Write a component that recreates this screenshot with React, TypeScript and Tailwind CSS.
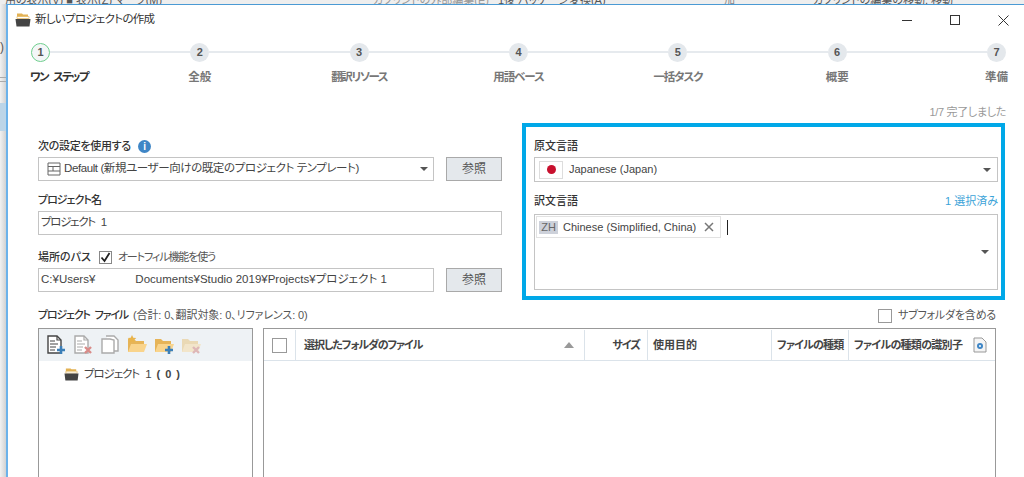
const jp = "font-['Liberation_Sans','Noto_Sans_CJK_JP',sans-serif] [font-feature-settings:'palt']";

const steps = [
  { label: "ワン ステップ", track: "tracking-[-1.8px] [word-spacing:4px]" },
  { label: "全般", track: "" },
  { label: "翻訳リソース", track: "tracking-[-1.5px]" },
  { label: "用語ベース", track: "tracking-[-1px]" },
  { label: "一括タスク", track: "tracking-[-1.2px]" },
  { label: "概要", track: "" },
  { label: "準備", track: "" },
];

const Caret = () => <div className="h-0 w-0 border-x-[4px] border-t-[4px] border-x-transparent border-t-[#555]" />;

const FileIcon = ({ color, mark, copy }: { color: string; mark?: "plus" | "x"; copy?: boolean }) => (
  <svg width="20" height="20" viewBox="0 0 20 20" fill="none">
    {copy && <path d="M6 1h8l4 4v11h-4" fill="#fff" stroke={color} strokeWidth="1.4" />}
    <path d={copy ? "M2 4h8l4 1v13H2z" : "M2 1h9l4 4v13H2z"} fill="#fff" stroke={color} strokeWidth="1.4" />
    {!copy && <path d="M11 1v4h4" stroke={color} strokeWidth="1.2" />}
    {!copy && <path d="M4 6h5M4 9h8M4 12h6M4 15h5" stroke={color} strokeWidth="1.2" />}
    {mark === "plus" && <path d="M15 11v8M11 15h8" stroke="#3b7fb8" strokeWidth="2.6" />}
    {mark === "x" && <path d="M12 12l6 6M18 12l-6 6" stroke="#d98b88" strokeWidth="2.4" />}
  </svg>
);

const FolderIcon = ({ mark, star, faded }: { mark?: "plus" | "x"; star?: boolean; faded?: boolean }) => (
  <svg width="20" height="20" viewBox="0 0 20 20" fill="none" opacity={faded ? 0.4 : 1}>
    <path d="M1 4h6l2 2h8v11H1z" fill="#e6b458" />
    <path d="M4 9h16l-3 8H1z" fill="#f9d48c" />
    {star && <path d="M5 0l1.300 2.800 3 .3-2.200 2 .6 3L5 6.600 2.300 8.100l.6-3-2.200-2 3-.3z" fill="#e9b44c" />}
    {mark === "plus" && <path d="M15 11v8M11 15h8" stroke="#3b7fb8" strokeWidth="2.6" />}
    {mark === "x" && <path d="M12 12l6 6M18 12l-6 6" stroke="#c8605c" strokeWidth="2.4" />}
  </svg>
);

const ProjectIcon = ({ size }: { size: number }) => (
  <svg width={size} height={size} viewBox="0 0 16 16" fill="none">
    <path d="M2 1.500h5l1 1h5v4H2z" fill="#e3b254" />
    <path d="M2 4.500h12v2H2z" fill="#fff" stroke="#e3b254" strokeWidth="0.6" />
    <path d="M0.500 7h15l-1 7.500h-13z" fill="#444" />
  </svg>
);

const BrowseButton = () => (
  <button className="flex h-[24px] w-[56px] items-center justify-center border border-[#a9a9a9] bg-[#e4e8ec] text-[12px] text-[#555]">
    参照
  </button>
);

const Label = ({ children, className = "" }: { children: React.ReactNode; className?: string }) => (
  <div className={`flex h-[22px] items-center text-[11px] font-medium text-[#333] ${className}`}>{children}</div>
);

const inputBox = "flex h-[24px] items-center border border-[#c4c4c4] bg-white text-[11.5px] text-[#444]";

const HeaderCell = ({ className, children }: { className: string; children: React.ReactNode }) => (
  <div className={`flex h-full shrink-0 items-center whitespace-nowrap border-r border-[#dbe3ea] text-[11px] font-bold text-[#444] ${className}`}>
    {children}
  </div>
);

const App = () => {
  return (
    <div className={`flex h-[477px] w-[1024px] flex-col overflow-hidden bg-white ${jp}`}>
      <div className="flex h-[4px] shrink-0 overflow-hidden bg-[#eeeeee] text-[11px] leading-[12px] text-[#555]">
        <div className="mt-[-6px] flex whitespace-nowrap">
          <span className="ml-[5px] w-[280px]">用の表示(V) ■ 表示(Z) マーク(M)</span>
          <span className="ml-[88px] w-[125px] text-[#999]">カソリンドの外部編集(E)</span>
          <span className="w-[226px]">1後 バッケージ変換(A)</span>
          <span className="w-[89px] text-[#888]">加</span>
          <span>カソリンドの編集の移動, 移動</span>
        </div>
      </div>
      <div className="flex min-h-0 flex-1">
        <div className="flex w-[6px] shrink-0 flex-col bg-gradient-to-r from-[#f2f2f2] to-[#d2d2d2]">
          <div className="mt-[35px] h-[16px] text-[12px] leading-[16px] text-[#555]">)</div>
          <div className="mt-[22px] h-[5px] border-y border-[#aaa]" />
          <div className="mt-[21px] h-[28px] bg-[#bcd5e8]" />
        </div>
        <div className="flex min-w-0 flex-1 flex-col border-l-2 border-t border-l-[#6cb2ea] border-t-[#4a9ad4] bg-white">
          <div className="flex h-[30px] shrink-0 items-center justify-between">
            <div className="ml-[7px] flex items-center gap-[4px] text-[11.5px] tracking-[-0.7px] text-[#333]">
              <ProjectIcon size={16} />
              <span>新しいプロジェクトの作成</span>
            </div>
            <div className="flex items-center">
              <div className="mr-[38px] h-px w-[10px] bg-[#333]" />
              <div className="mr-[38px] h-[10px] w-[10px] border border-[#333]" />
              <svg width="11" height="11" viewBox="0 0 11 11" fill="none" className="mr-[15px]">
                <path d="M0.500 0.500l10 10M10.500 0.500l-10 10" stroke="#333" />
              </svg>
            </div>
          </div>

          <div className="ml-[23px] mr-[18px] mt-[8px] flex shrink-0 items-start">
            {steps.map((step, i) => (
              <div key={step.label} className={`flex items-start ${i < 6 ? "flex-1" : ""}`}>
                <div className="flex w-[19px] shrink-0 flex-col items-center">
                  <div
                    className={`flex h-[19px] w-[19px] items-center justify-center rounded-full text-[11px] font-bold text-[#555] ${i === 0 ? "border border-[#6fcf8e] bg-[#f4f6f8]" : "bg-[#e4e8ec]"}`}
                  >
                    {i + 1}
                  </div>
                  <div
                    className={`mt-[8px] whitespace-nowrap text-[11.5px] font-bold leading-[14px] ${step.track} ${i === 0 ? "ml-[-1px] self-start text-[#333]" : "text-[#777]"}`}
                  >
                    {step.label}
                  </div>
                </div>
                {i < 6 && <div className="mt-[8px] h-[2px] flex-1 bg-[#e6eaee]" />}
              </div>
            ))}
          </div>

          <div className="mr-[18px] mt-[21px] h-[14px] shrink-0 text-right text-[11px] leading-[14px] tracking-[-0.3px] text-[#999]">1/7 完了しました</div>

          <div className="ml-[30px] mr-[18px] mt-[4px] flex shrink-0 items-start">
            <div className="mt-[12px] flex w-[464px] flex-col">
              <div>
                <Label className="gap-[7px] tracking-[-0.3px]">
                  次の設定を使用する
                  <div className="flex h-[13px] w-[13px] items-center justify-center rounded-full bg-[#3f86c6] text-[10px] font-bold text-white">i</div>
                </Label>
                <div className="flex items-center gap-[12px]">
                  <div className={`${inputBox} w-[396px] pl-[8px] pr-[5px] tracking-[-0.4px]`}>
                    <svg width="14" height="14" viewBox="0 0 14 14" className="mr-[3px] shrink-0">
                      <path d="M1 1h12v12H1z" fill="#fff" stroke="#666" />
                      <path d="M1 4.500h12M1 9h12M6 4.500v4.500" stroke="#666" />
                    </svg>
                    <span className="flex-1">Default (新規ユーザー向けの既定のプロジェクト テンプレート)</span>
                    <Caret />
                  </div>
                  <BrowseButton />
                </div>
              </div>
              <div className="mt-[8px]">
                <Label className="tracking-[-1px]">プロジェクト名</Label>
                <div className={`${inputBox} px-[2px] tracking-[-1.3px] [word-spacing:4px]`}>プロジェクト 1</div>
              </div>
              <div className="mt-[11px]">
                <Label>
                  場所のパス
                  <div className="ml-[8px] mr-[6px] flex h-[13px] w-[13px] items-center justify-center border border-[#888]">
                    <svg width="11" height="11" viewBox="0 0 11 11" fill="none">
                      <path d="M1.500 5.500l3 3.500 5-8" stroke="#222" strokeWidth="1.800" />
                    </svg>
                  </div>
                  <span className="font-normal tracking-[-1.1px] text-[#555]">オートフィル機能を使う</span>
                </Label>
                <div className="flex items-center gap-[12px]">
                  <div className={`${inputBox} w-[396px] px-[2px]`}>
                    C:¥Users¥
                    <span className="ml-[40px]">Documents¥Studio 2019¥Projects¥プロジェクト 1</span>
                  </div>
                  <BrowseButton />
                </div>
              </div>
            </div>

            <div className="ml-[20px] flex h-[177px] w-[483px] flex-col border-[4px] border-[#00a8e8] pl-[8px] pr-[3px] pt-[8px]">
              <Label>原文言語</Label>
              <div className={`${inputBox} h-[25px] justify-between pl-[4px] pr-[6px] text-[11px]`}>
                <div className="flex items-center gap-[6px]">
                  <div className="flex h-[18px] w-[24px] items-center justify-center border border-[#ddd] bg-white">
                    <div className="h-[9px] w-[9px] rounded-full bg-[#c8102e]" />
                  </div>
                  Japanese (Japan)
                </div>
                <Caret />
              </div>
              <Label className="mt-[8px] justify-between">
                訳文言語
                <span className="font-normal text-[#3ba3d8]">1 選択済み</span>
              </Label>
              <div className="mt-[2px] flex h-[76px] items-start justify-between border border-[#c4c4c4] p-[1px] pr-[8px] text-[11px] text-[#444]">
                <div className="flex items-start">
                  <div className="flex h-[22px] w-[185px] items-center border border-[#e2e2e2] pl-[2px]">
                    <span className="mr-[5px] flex h-[13px] w-[19px] items-center justify-center bg-[#cdd1da] text-[11px] text-[#666]">ZH</span>
                    <span className="flex-1">Chinese (Simplified, China)</span>
                    <svg width="10" height="10" viewBox="0 0 10 10" fill="none" className="mr-[6px]">
                      <path d="M1 1l8 8M9 1l-8 8" stroke="#777" strokeWidth="1.500" />
                    </svg>
                  </div>
                  <div className="ml-[6px] mt-[4px] h-[15px] w-px bg-[#222]" />
                </div>
                <div className="mt-[34px]">
                  <Caret />
                </div>
              </div>
            </div>
          </div>

          <div className="mb-[2px] ml-[30px] mr-[28px] mt-[5px] flex h-[21px] shrink-0 items-center justify-between">
            <div className="text-[11px] text-[#555]">
              <span className="font-medium tracking-[-1.2px] text-[#333] [word-spacing:3px]">プロジェクト ファイル</span>
              <span className="ml-[5px] tracking-[-0.1px]">(合計: 0、翻訳対象: 0、リファレンス: 0)</span>
            </div>
            <div className="flex items-center gap-[6px] text-[11px] tracking-[-0.2px] text-[#555]">
              <div className="h-[14px] w-[14px] border border-[#999]" />
              サブフォルダを含める
            </div>
          </div>

          <div className="ml-[30px] mr-[28px] flex min-h-0 flex-1 gap-[10px]">
            <div className="flex w-[215px] shrink-0 flex-col border-l border-r border-t border-[#999]">
              <div className="flex h-[32px] shrink-0 items-center gap-[7px] bg-[#eef2f5] pl-[7px]">
                <FileIcon color="#444" mark="plus" />
                <FileIcon color="#aaa" mark="x" />
                <FileIcon color="#aaa" copy />
                <FolderIcon star />
                <FolderIcon mark="plus" />
                <FolderIcon mark="x" faded />
              </div>
              <div className="ml-[25px] mt-[5px] flex items-center gap-[5px] text-[11.5px] text-[#444]">
                <ProjectIcon size={15} />
                <span className="tracking-[-1.1px] [word-spacing:4px]">プロジェクト 1</span>
                <span className="ml-[1px] text-[11px] font-bold tracking-[0.5px] [word-spacing:1px]">( 0 )</span>
              </div>
            </div>
            <div className="flex min-w-0 flex-1 flex-col border-l border-r border-t border-[#999]">
              <div className="flex h-[32px] shrink-0 items-center border-b border-[#dbe3ea] pt-[1px]">
                <HeaderCell className="w-[32px] justify-center">
                  <div className="h-[15px] w-[15px] border border-[#999]" />
                </HeaderCell>
                <HeaderCell className="w-[289px] justify-between pl-[8px] pr-[10px] tracking-[-1.1px]">
                  選択したフォルダのファイル
                  <div className="h-0 w-0 border-x-[5px] border-b-[6px] border-x-transparent border-b-[#999]" />
                </HeaderCell>
                <HeaderCell className="w-[63px] justify-end pr-[7px] tracking-[-1px]">サイズ</HeaderCell>
                <HeaderCell className="w-[124px] pl-[5px]">使用目的</HeaderCell>
                <HeaderCell className="w-[77px] pl-[5px] tracking-[-0.8px]">ファイルの種類</HeaderCell>
                <div className="flex flex-1 items-center justify-between whitespace-nowrap pl-[5px] pr-[8px] text-[11px] font-bold tracking-[-0.7px] text-[#444]">
                  ファイルの種類の識別子
                  <svg width="14" height="16" viewBox="0 0 14 16" fill="none">
                    <path d="M1 1h8l4 4v10H1z" fill="#f4f4f4" stroke="#999" />
                    <circle cx="7" cy="9" r="3" fill="#3f86c6" />
                    <circle cx="7" cy="9" r="1" fill="#fff" />
                  </svg>
                </div>
              </div>
            </div>
          </div>
        </div>
      </div>
    </div>
  );
};

export default App;
